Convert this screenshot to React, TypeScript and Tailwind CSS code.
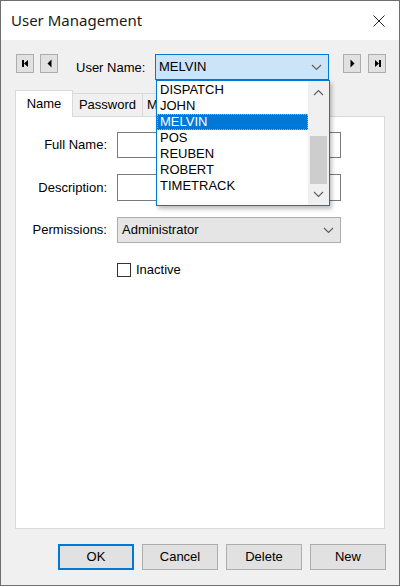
const users = ["DISPATCH", "JOHN", "MELVIN", "POS", "REUBEN", "ROBERT", "TIMETRACK"];

function NavButton({ dir, end }: { dir: "left" | "right"; end?: boolean }) {
  return (
    <div className="w-[18px] h-[19px] bg-[#e1e1e1] border border-[#adadad] flex items-center justify-center">
      <svg width="9" height="9" viewBox="0 0 9 9">
        {dir === "left" ? (
          <>
            {end && <rect x="1" y="1" width="2" height="7" fill="#000" />}
            <polygon points={end ? "3,4.5 7,1 7,8" : "2.5,4.5 6.5,0.5 6.5,8.5"} fill="#000" />
          </>
        ) : (
          <>
            <polygon points={end ? "2,1 6,4.5 2,8" : "2.5,0.5 6.5,4.5 2.5,8.5"} fill="#000" />
            {end && <rect x="6" y="1" width="2" height="7" fill="#000" />}
          </>
        )}
      </svg>
    </div>
  );
}

function Chevron({ up }: { up?: boolean }) {
  return (
    <svg width="11" height="7" viewBox="0 0 11 7">
      <polyline
        points={up ? "1,6 5.5,1.5 10,6" : "1,1 5.5,5.5 10,1"}
        fill="none"
        stroke="#606060"
        strokeWidth="1.2"
      />
    </svg>
  );
}

function Field({ label, children }: { label: string; children: React.ReactNode }) {
  return (
    <div className="flex items-center">
      <div className="w-[92px] text-right pr-px">{label}</div>
      <div className="ml-[9px]">{children}</div>
    </div>
  );
}

export default function App() {
  return (
    <div
      className="relative w-[400px] h-[586px] border border-[#6f6f6f] bg-[#f0f0f0] flex flex-col text-[13px] text-black"
      style={{ fontFamily: '"Liberation Sans", Arial, sans-serif' }}>
      {/* title bar */}
      <div className="h-[39px] bg-white flex items-center justify-between pl-[10px] pr-[14px]">
        <span className="text-[15px] text-[#1a1a1a]" style={{ fontFamily: '"Noto Sans", sans-serif' }}>
          User Management
        </span>
        <svg width="12" height="12" viewBox="0 0 12 12">
          <line x1="0.5" y1="0.5" x2="11.5" y2="11.5" stroke="#222" strokeWidth="1" />
          <line x1="11.5" y1="0.5" x2="0.5" y2="11.5" stroke="#222" strokeWidth="1" />
        </svg>
      </div>

      {/* record nav */}
      <div className="mt-[14px] h-[26px] flex items-start pl-[15px]">
        <NavButton dir="left" end />
        <div className="ml-[6px]">
          <NavButton dir="left" />
        </div>
        <div className="ml-[18px] w-[79px] h-[26px] flex items-center pt-[1px]">User Name:</div>
        <div className="w-[174px] h-[26px] bg-[#cce4f7] border border-[#0078d7] flex items-center justify-between pl-[3px] pr-[6px]">
          <span>MELVIN</span>
          <Chevron />
        </div>
        <div className="ml-[14px]">
          <NavButton dir="right" />
        </div>
        <div className="ml-[7px]">
          <NavButton dir="right" end />
        </div>
      </div>

      {/* tabs */}
      <div className="mt-[10px] ml-[14px] flex items-end h-[26px]">
        <div className="relative z-10 -mb-px h-[27px] w-[58px] bg-white border border-b-0 border-[#d9d9d9] flex items-center justify-center pb-[1px]">
          Name
        </div>
        <div className="h-[23px] w-[70px] border border-l-0 border-b-0 border-[#d9d9d9] flex items-center justify-center">
          Password
        </div>
        <div className="h-[23px] w-[80px] border border-l-0 border-b-0 border-[#d9d9d9] flex items-center pl-[4px]">
          Menu
        </div>
      </div>

      {/* tab panel */}
      <div className="flex-1 mx-[14px] bg-white border border-[#d9d9d9] pt-[15px] flex flex-col">
        <Field label="Full Name:">
          <div className="w-[224px] h-[26px] bg-white border border-[#7a7a7a]" />
        </Field>
        <div className="mt-[16px]">
          <Field label="Description:">
            <div className="w-[224px] h-[27px] bg-white border border-[#7a7a7a]" />
          </Field>
        </div>
        <div className="mt-[16px]">
          <Field label="Permissions:">
            <div className="w-[224px] h-[26px] bg-[#e5e5e5] border border-[#adadad] flex items-center justify-between pl-[4px] pr-[6px]">
              <span>Administrator</span>
              <Chevron />
            </div>
          </Field>
        </div>
        <div className="mt-[17px] ml-[101px] flex items-center">
          <div className="w-[14px] h-[14px] bg-white border border-[#333]" />
          <span className="ml-[5px]">Inactive</span>
        </div>
      </div>

      {/* buttons */}
      <div className="mt-[15px] mb-[15px] h-[26px] flex justify-end gap-[8px] pr-[13px]">
        <button className="w-[76px] h-[26px] bg-[#e1e1e1] border-2 border-[#0078d7]">OK</button>
        <button className="w-[76px] h-[26px] bg-[#e1e1e1] border border-[#adadad]">Cancel</button>
        <button className="w-[76px] h-[26px] bg-[#e1e1e1] border border-[#adadad]">Delete</button>
        <button className="w-[76px] h-[26px] bg-[#e1e1e1] border border-[#adadad]">New</button>
      </div>

      {/* open dropdown list */}
      <div className="absolute left-[155px] top-[79px] w-[174px] h-[126px] bg-white border border-[#0078d7] flex shadow-[2px_3px_4px_rgba(0,0,0,0.25)]">
        <div className="flex-1 flex flex-col pt-px">
          {users.map((u) => (
            <div
              key={u}
              className={
                u === "MELVIN"
                  ? "h-[16px] leading-[16px] pl-[3px] bg-[#0078d7] text-white outline-1 outline-dotted outline-[#f0a050] -outline-offset-1"
                  : "h-[16px] leading-[16px] pl-[3px]"
              }>
              {u}
            </div>
          ))}
        </div>
        <div className="w-[21px] bg-[#f0f0f0] flex flex-col items-center">
          <div className="h-[22px] flex items-center justify-center">
            <Chevron up />
          </div>
          <div className="mt-[33px] w-[17px] h-[48px] bg-[#cdcdcd]" />
          <div className="flex-1 flex items-center justify-center">
            <Chevron />
          </div>
        </div>
      </div>
    </div>
  );
}
